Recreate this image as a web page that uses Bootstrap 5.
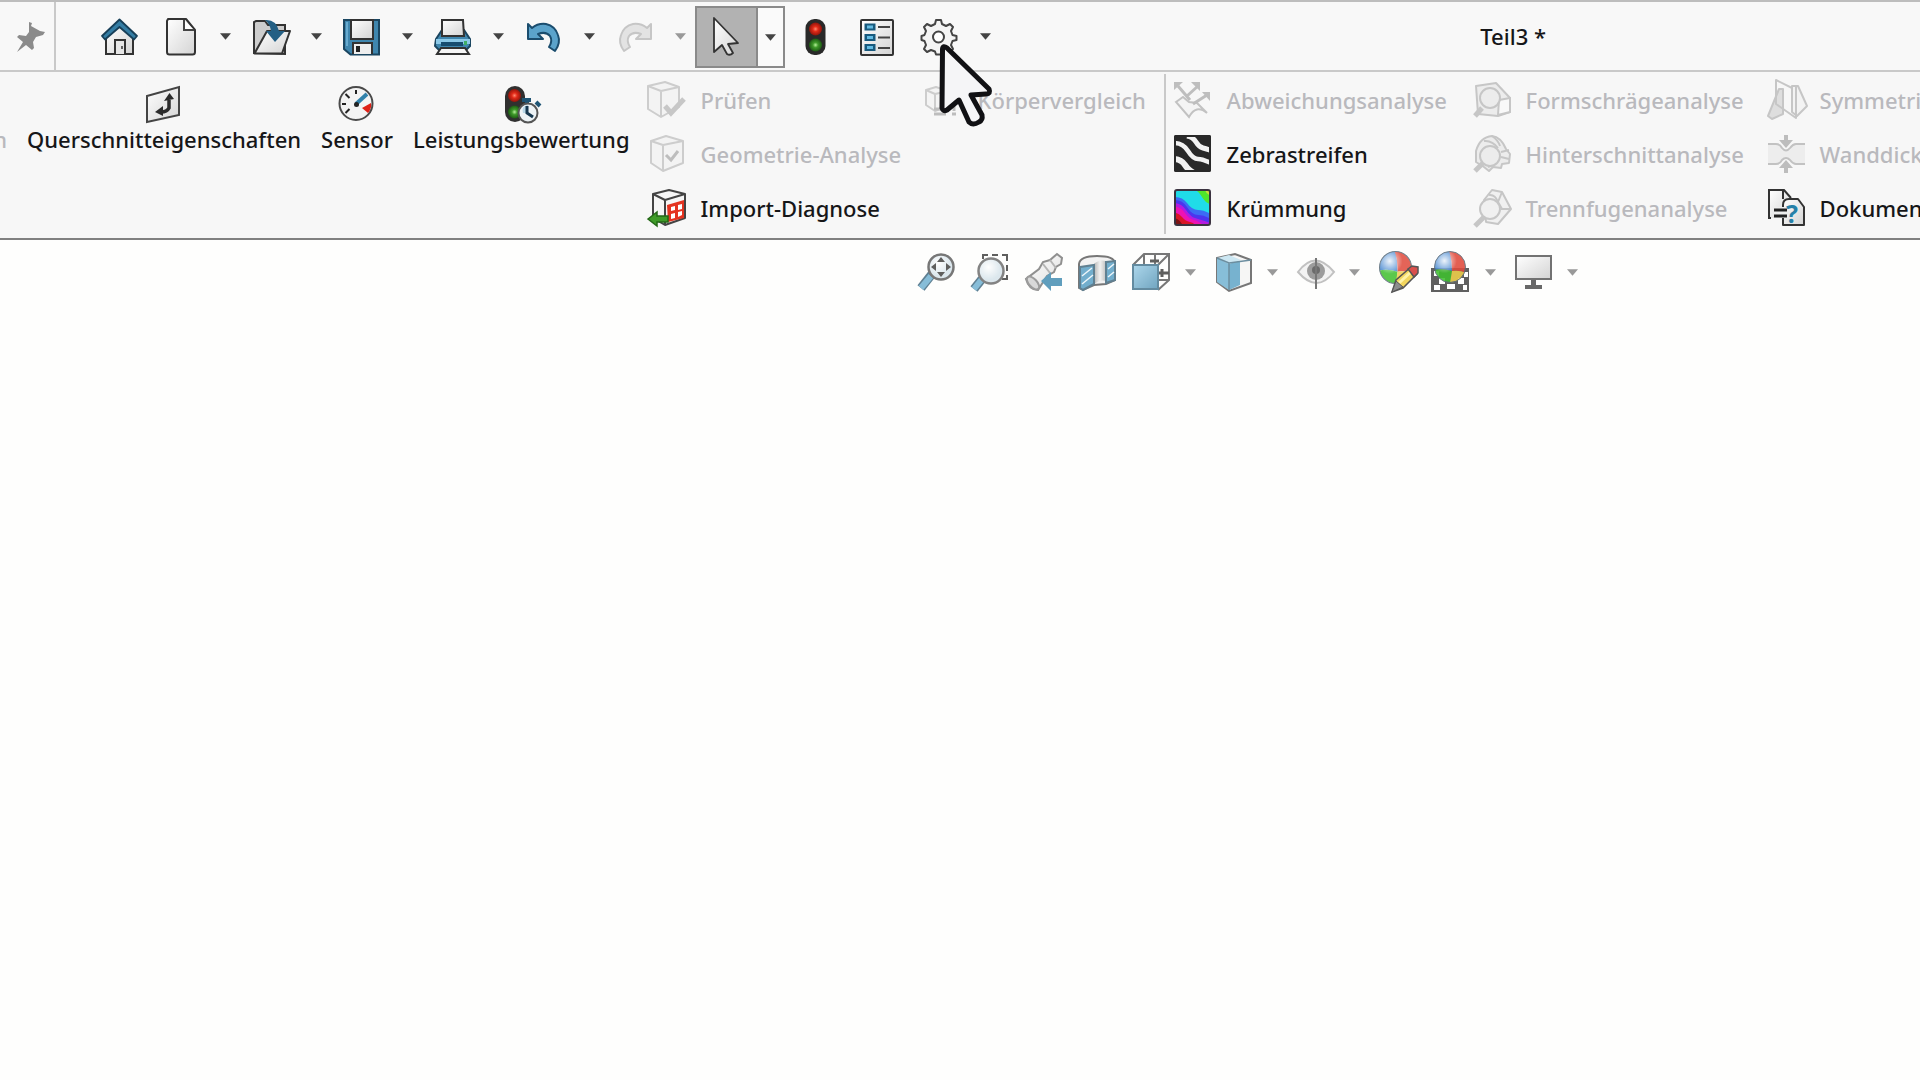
<!DOCTYPE html>
<html lang="de">
<head>
<meta charset="utf-8">
<meta name="viewport" content="width=device-width, initial-scale=1">
<title>Teil3 *</title>
<link href="https://cdn.jsdelivr.net/npm/bootstrap@5.3.0/dist/css/bootstrap.min.css" rel="stylesheet">
<style>
body{background:#fefefd;color:#161618;font-family:"Noto Sans","Open Sans",sans-serif;font-size:22px;font-weight:500;line-height:28px;overflow:hidden}
svg{display:block;flex:none;overflow:visible}
.ic{width:40px;height:40px}
.tool,.drop,.cmd,.bigcmd{border:0;background:none;padding:0;color:inherit;font-weight:inherit;display:flex;align-items:center;flex:none;white-space:nowrap}
.tool,.drop{justify-content:center}
.titlebar{height:72px;background:#f8f8f8;border-top:2px solid #bdbdbd;border-bottom:2px solid #c9c9c9}
.pinbox{width:56px;border-right:2px solid #c9c9c9}
.quick{padding-left:31px}
.quick .tool{width:62px;height:62px;padding-top:2px}
.quick .drop{width:29px;height:62px}
.splitsel{border:2px solid #8a8a8a;width:90px;height:62px;background:#fafafa;margin-top:2px}
.quick .splitsel .tool{width:61px;height:58px;padding:0 8px 0 0;background:#b2b2b2;border-right:2px solid #8a8a8a}
.quick .splitsel .drop{width:25px;height:58px}
.doctitle{margin-left:auto;margin-right:374px}
.ribbon{height:168px;background:#f7f7f7;border-bottom:2px solid #808080;padding-top:1px}
.bigcmd{flex-direction:column;padding:12px 10px 0;height:160px;justify-content:flex-start}
.cutoff{width:17px;padding:52px 10px 0 0;align-items:flex-end}
.cmd{height:54px;gap:14px}
.off{color:#b9b9bd}
.colcheck,.colbody,.colsurf,.colmold{flex:none}
.colcheck{width:277px;margin-left:7px}
.colbody{width:240px}
.vline{width:2px;height:160px;background:#c9c9c9;margin:1px 7px 0 0;flex:none}
.colsurf{width:299px}
.colmold{width:294px}
.hud{padding-left:909px;padding-top:8px}
.hud .tool{width:54px;height:48px}
.hud .drop{width:28px;height:48px;padding-right:6px}
.soft{opacity:.72}
.pointer{position:absolute;left:938px;top:42px;width:56px;height:86px;pointer-events:none}
</style>
<script src="https://cdn.jsdelivr.net/npm/bootstrap@5.3.0/dist/js/bootstrap.bundle.min.js"></script>
</head>
<body>
<svg width="0" height="0" class="position-absolute" aria-hidden="true">
 <defs>
  <linearGradient id="paper" x1="0" y1="0" x2="1" y2="1"><stop offset="0" stop-color="#fff"/><stop offset="1" stop-color="#d4d4d4"/></linearGradient>
  <linearGradient id="blue" x1="0" y1="0" x2="1" y2="1"><stop offset="0" stop-color="#8fc9e6"/><stop offset="1" stop-color="#3a83a9"/></linearGradient>
  <linearGradient id="tube" x1="0" y1="0" x2="1" y2="0"><stop offset="0" stop-color="#999"/><stop offset=".5" stop-color="#eee"/><stop offset="1" stop-color="#aaa"/></linearGradient>
  <radialGradient id="lens" cx=".4" cy=".35"><stop offset="0" stop-color="#fff"/><stop offset="1" stop-color="#cfdfe8"/></radialGradient>
  <radialGradient id="red"><stop offset="0" stop-color="#ff8a70"/><stop offset=".4" stop-color="#e22a18"/><stop offset="1" stop-color="#8e150c"/></radialGradient>
  <radialGradient id="green"><stop offset="0" stop-color="#b6f09a"/><stop offset=".4" stop-color="#3f9a2a"/><stop offset="1" stop-color="#1d5a14"/></radialGradient>
  <radialGradient id="shine" cx=".32" cy=".3" r=".4"><stop offset="0" stop-color="#fff" stop-opacity=".9"/><stop offset="1" stop-color="#fff" stop-opacity="0"/></radialGradient>
  <symbol id="caret" viewBox="0 0 12 7"><path d="M0 0h12L6 7z" fill="currentColor"/></symbol>
  <symbol id="ball" viewBox="0 0 32 32">
   <clipPath id="round"><circle cx="16" cy="16" r="15.500"/></clipPath>
   <g clip-path="url(#round)"><path d="M0 0h16q2 8 2 20Q8 17 0 19z" fill="#3f83cf"/><path d="M15 0h17v22q-6-3-14-2Q18 8 15 0z" fill="#e04a3c"/><path d="M0 19q9-2 18 1l-1 12H0z" fill="#3fbf2e"/><path d="M18 20q8-1 14 2v10H16z" fill="#f0cf4a"/></g>
   <circle cx="16" cy="16" r="15.500" fill="url(#shine)" stroke="#5a6b78" stroke-width="1"/>
  </symbol>
 </defs>
</svg>

<header class="titlebar d-flex align-items-center">
 <div class="pinbox d-flex align-items-center justify-content-center align-self-stretch">
  <button class="tool" aria-label="Anheften"><svg class="ic" viewBox="0 0 40 40"><path d="M20 6l3 1-1 3 9 5 5 1-2 3-7 2-3 5 1 6-2 2-6-5-9 7 6-10-6-5 2-2 7 1 3-4z" transform="translate(2 0)" fill="#8b8b8b"/></svg></button>
 </div>
 <nav class="quick d-flex align-items-center" aria-label="Schnellzugriff">
  <button class="tool" aria-label="Startseite"><svg class="ic" viewBox="0 0 40 40"><g transform="translate(1 0)"><path d="M7 20v17h27V20L20.500 8z" fill="url(#paper)" stroke="#333" stroke-width="2"/><path d="M16 37V23h10v14" fill="#e6e6e6" stroke="#333" stroke-width="2"/><path d="M23 29v3" stroke="#333" stroke-width="1.500"/><path d="M3 19L20.500 2.500 38 19l-3 3.500L20.500 10 6 22.500z" fill="#347da4" stroke="#173f58" stroke-width="1.800" stroke-linejoin="round"/></g></svg></button>
  <button class="tool" aria-label="Neu"><svg class="ic" viewBox="0 0 40 40"><path d="M8 2h18l9 11v22q0 2.500-2.500 2.500h-23Q7 37.500 7 35V4z" fill="url(#paper)" stroke="#333" stroke-width="2" stroke-linejoin="round"/><path d="M24 3v10h10" fill="#fff" stroke="#444" stroke-width="2"/></svg></button>
  <button class="drop" aria-label="Neu Optionen"><svg width="11" height="7" color="#444"><use href="#caret"/></svg></button>
  <button class="tool" aria-label="Öffnen"><svg class="ic" viewBox="0 0 40 40"><path d="M3 36V5l2-1h9l3 4h17v29z" fill="#cdcdcd" stroke="#333" stroke-width="2"/><path d="M3.500 36.500L16 14h23l-8 22.500z" fill="url(#paper)" stroke="#333" stroke-width="2" stroke-linejoin="round"/><path d="M14 3q11-1 14 11h6l-10 11-9-11h5q-1-7-6-11z" fill="#235f84"/></svg></button>
  <button class="drop" aria-label="Öffnen Optionen"><svg width="11" height="7" color="#444"><use href="#caret"/></svg></button>
  <button class="tool" aria-label="Speichern"><svg class="ic" viewBox="0 0 40 40"><path d="M2 3h35v34.500H8.500L2 32z" fill="#3f86ae" stroke="#1b4661" stroke-width="2"/><path d="M5 5v24" stroke="#68abd0" stroke-width="2"/><rect x="9" y="3" width="22" height="19" fill="url(#paper)" stroke="#333" stroke-width="2"/><path d="M11 37V26h19v11" fill="#eee" stroke="#333" stroke-width="2"/><path d="M14 29h4v6h-4z" fill="#222"/></svg></button>
  <button class="drop" aria-label="Speichern Optionen"><svg width="11" height="7" color="#444"><use href="#caret"/></svg></button>
  <button class="tool" aria-label="Drucken"><svg class="ic" viewBox="0 0 40 40"><path d="M3 22l6-9h22l6 9v7l-4 4H6l-4-4z" fill="#3f86ae" stroke="#1b4661" stroke-width="2"/><path d="M9 19V3h21l1 16z" fill="url(#paper)" stroke="#333" stroke-width="2"/><path d="M3 22h34v5H3z" fill="#8cc9e8"/><path d="M8 25h22v4H8z" fill="#174d70"/><path d="M31 24h3v4h-3z" fill="#3fae67"/><path d="M8 31h24l4 6H4z" fill="#f6f6f6" stroke="#333" stroke-width="2"/></svg></button>
  <button class="drop" aria-label="Drucken Optionen"><svg width="11" height="7" color="#444"><use href="#caret"/></svg></button>
  <button class="tool" aria-label="Rückgängig"><svg class="ic" viewBox="0 0 40 40"><path d="M4 7v15h15l-5-5q8-3 12 2 3 5-1 11l6 4q6-8 3-16-3-9-12-11-8-1-14 4z" fill="#5ba3cb" stroke="#1b4d6e" stroke-width="2" stroke-linejoin="round"/></svg></button>
  <button class="drop" aria-label="Rückgängig Optionen"><svg width="11" height="7" color="#444"><use href="#caret"/></svg></button>
  <button class="tool" aria-label="Wiederholen"><svg class="ic" viewBox="0 0 40 40"><path d="M36 7v15H21l5-5q-8-3-12 2-3 5 1 11l-6 4Q3 26 6 18q3-9 12-11 8-1 14 4z" fill="#e3e3e3" stroke="#c6c6c6" stroke-width="2" stroke-linejoin="round"/></svg></button>
  <button class="drop" aria-label="Wiederholen Optionen"><svg width="11" height="7" color="#999"><use href="#caret"/></svg></button>
  <div class="splitsel d-flex">
   <button class="tool" aria-label="Auswählen"><svg class="ic" viewBox="0 0 40 40"><path d="M11 1v34l8-7 5 9q3 2 6-1l-5-9 10-1z" fill="url(#paper)" stroke="#333" stroke-width="1.800" stroke-linejoin="round"/></svg></button>
   <button class="drop" aria-label="Auswählen Optionen"><svg width="11" height="7" color="#444"><use href="#caret"/></svg></button>
  </div>
  <button class="tool" aria-label="Modellneuaufbau"><svg class="ic" viewBox="0 0 40 40"><rect x="9.500" y="2" width="20" height="36" rx="9" fill="#292929"/><circle cx="19.500" cy="12" r="6.500" fill="url(#red)"/><circle cx="19.500" cy="28" r="6.500" fill="url(#green)"/></svg></button>
  <button class="tool" aria-label="Dateieigenschaften"><svg class="ic" viewBox="0 0 40 40"><rect x="3" y="3" width="32" height="35" rx="1" fill="url(#paper)" stroke="#333" stroke-width="2"/><path d="M6.500 6.500h11v7h-11zM6.500 17h11v7h-11zM6.500 27h11v7h-11z" fill="#185a7e"/><path d="M9 8.500h6v3H9zM9 19h6v3H9zM9 29h6v3H9z" fill="#63bbe2"/><path d="M20 10h12M20 20.500h12M20 31h12" stroke="#444" stroke-width="2"/></svg></button>
  <button class="tool" aria-label="Optionen"><svg class="ic" viewBox="0 0 40 40"><g transform="translate(-1 -1)"><path d="M17 4h5l1 4 4 2 4-2 3 3-2 4 1.500 4 4 1v4l-4 1-1.500 4 2 4-3 3-4-2-4 1.500-1 3h-5l-1-3-4-1.500-4 2-3-3 2-4L5.500 25l-3-1v-4l3-1L7 15l-2-4 3-3 4 2 4-2z" fill="#f4f4f4" stroke="#444" stroke-width="2" stroke-linejoin="round"/><circle cx="19.500" cy="21" r="5.500" fill="#fff" stroke="#444" stroke-width="2"/></g></svg></button>
  <button class="drop" aria-label="Optionen Menü"><svg width="11" height="7" color="#444"><use href="#caret"/></svg></button>
 </nav>
 <div class="doctitle">Teil3 *</div>
</header>

<section class="ribbon d-flex overflow-hidden" aria-label="Evaluieren">
 <button class="bigcmd cutoff off" disabled>n</button>
 <button class="bigcmd"><svg class="ic" viewBox="0 0 40 40"><g transform="translate(-1 -1)"><path d="M4 12l32-9v28L4 38z" fill="url(#paper)" stroke="#444" stroke-width="2"/><path d="M26 16v8q-2 4-8 4" fill="none" stroke="#2b2b2b" stroke-width="3.500"/><path d="M21 17l5.500-8 4.500 6zM20 22v10l-8-4z" fill="#2b2b2b"/></g></svg>Querschnitteigenschaften</button>
 <button class="bigcmd"><svg class="ic" viewBox="0 0 40 40"><g transform="translate(-1 -1)"><circle cx="20" cy="19.500" r="16.500" fill="#f3f3f3" stroke="#4a4a4a" stroke-width="2"/><path d="M20 6v4M6 20h4M9.500 10l4 4M9.500 29l4-4" stroke="#222" stroke-width="2"/><path d="M20 20L31 10" stroke="#3181aa" stroke-width="4"/><circle cx="20.500" cy="20.500" r="2.500" fill="#222"/><path d="M26 24l9-5q1 5-3 10z" fill="#df2116"/></g></svg>Sensor</button>
 <button class="bigcmd"><svg class="ic" viewBox="0 0 40 40"><g transform="translate(2 0)"><rect x="2" y="1" width="20" height="36" rx="10" fill="#303030"/><circle cx="11.500" cy="10.500" r="6.500" fill="url(#red)"/><circle cx="11.500" cy="27" r="6.500" fill="url(#green)"/><path d="M19 15h9M33 17l4 4M24 15v4" stroke="#1e5474" stroke-width="4"/><circle cx="25" cy="28" r="9.500" fill="#edf3f6" stroke="#555" stroke-width="2"/><path d="M25 28v-8q-7 1-5 8z" fill="#b8d8e8"/><path d="M24 21v7l6 4" fill="none" stroke="#173850" stroke-width="3"/></g></svg>Leistungsbewertung</button>
 <div class="colcheck">
  <button class="cmd off" disabled><svg class="ic" viewBox="0 0 40 40"><g fill="#f3f3f3" stroke="#cdcdcd" stroke-width="2" stroke-linejoin="round"><path d="M1 6l17-4 14 5v20l-18 10L1 29z"/><path d="M1 6l13 5 18-4M14 11v26" fill="none"/></g><path d="M18 26l6 7 13-14" fill="none" stroke="#c7c7c7" stroke-width="5"/></svg>Prüfen</button>
  <button class="cmd off" disabled><svg class="ic" viewBox="0 0 40 40"><g fill="#f3f3f3" stroke="#cdcdcd" stroke-width="2" stroke-linejoin="round"><path d="M4 7l15-5 17 5v22l-20 8-12-8z"/><path d="M4 7l12 4 20-4M16 11v26" fill="none"/></g><path d="M19 21l5 5 7-9" fill="none" stroke="#bdbdbd" stroke-width="3"/></svg>Geometrie-Analyse</button>
  <button class="cmd"><svg class="ic" viewBox="0 0 40 40"><g fill="#f6f6f6" stroke="#444" stroke-width="2" stroke-linejoin="round"><path d="M6 6l16-4 16 4v24l-20 7-12-7z"/><path d="M6 6l12 6 20-6M18 12v25" fill="none"/></g><path d="M20 17l17-5v18l-16 4z" fill="#e43320"/><path d="M24 19l4-1v4l-4 1zM31 17l4-1v5l-4 1zM24 26l4-1v5l-4 1zM31 24l4-1v4l-4 2z" fill="#fff"/><path d="M1 31l9-7v4h11v6H10v4z" fill="#3f9b28" stroke="#246817" stroke-width="1.500"/></svg>Import-Diagnose</button>
 </div>
 <div class="colbody">
  <button class="cmd off" disabled><svg class="ic" viewBox="0 0 40 40"><g fill="#f4f4f4" stroke="#cdcdcd" stroke-width="2" stroke-linejoin="round"><path d="M2 10l10-3 12 4v15l-13 5-9-6z"/><path d="M2 10l9 4 13-3M11 14v17" fill="none"/></g><path d="M10 29h12M10 34h12M28 34h4M30 25v6" stroke="#bdbdbd" stroke-width="3"/></svg>Körpervergleich</button>
 </div>
 <div class="vline"></div>
 <div class="colsurf">
  <button class="cmd off" disabled><svg class="ic" viewBox="0 0 40 40"><path d="M3 22l7-5 6 5 8 1 10 10q-11-9-18 4z" fill="#f4f4f4" stroke="#c2c2c2" stroke-width="2"/><path d="M17 20L5 6M14 16L25 6M20 24l14-9" stroke="#bebebe" stroke-width="3"/><path d="M1 2h9l-9 8zM18 2h9v9zM29 12h8v9z" fill="#bebebe"/></svg>Abweichungsanalyse</button>
  <button class="cmd"><svg class="ic" viewBox="0 0 40 40"><clipPath id="zb"><rect x="2" y="2" width="35" height="35" rx="1"/></clipPath><rect x="1" y="1" width="37" height="37" rx="2" fill="#292929"/><g clip-path="url(#zb)" fill="none" stroke="#f2f2f2" stroke-width="4.500"><path d="M1 9q9 0 14 8t10 8 15 5"/><path d="M0 25q8 0 12 6t9 8" stroke-width="6"/><path d="M14 2q6 1 9 6t7 6 10 3" stroke-width="5"/></g><rect x="2" y="2" width="35" height="35" rx="1" fill="none" stroke="#292929" stroke-width="2"/></svg>Zebrastreifen</button>
  <button class="cmd"><svg class="ic" viewBox="0 0 40 40"><clipPath id="kr"><rect x="2" y="2" width="35" height="35" rx="1"/></clipPath><g clip-path="url(#kr)"><rect width="40" height="40" fill="#20dce8"/><path d="M19 0h21v17q-7-1-11-8T19 0z" fill="#4fe52b"/><path d="M31 0h9v9q-7-2-9-9z" fill="#c9dc38"/><path d="M0 9q9-1 14 6t11 7 15 5v13H0z" fill="#3c6bf4"/><path d="M0 12q9-1 14 7t11 8 15 5v8H0z" fill="#4b35ee"/><path d="M0 15q8 0 13 7t9 8 18 6v4H0z" fill="#b21be0"/><path d="M0 18q8 1 12 7t9 7 13 8H0z" fill="#ee12b4"/><path d="M0 24q6 1 9 5t8 5 7 6H0z" fill="#d81626"/><path d="M0 30q7 0 11 10H0z" fill="#7d1515"/></g><rect x="2" y="2" width="35" height="35" rx="2" fill="none" stroke="#3b3340" stroke-width="2"/></svg>Krümmung</button>
 </div>
 <div class="colmold">
  <button class="cmd off" disabled><svg class="ic" viewBox="0 0 40 40"><g fill="#ececec" stroke="#c6c6c6" stroke-width="2" stroke-linejoin="round"><path d="M4 6l20-3 14 15v14l-12 4-20-2z"/><path d="M27 20l11-2v14l-12 3z" fill="#f9f9f9"/><path d="M3 36l7-8" stroke-width="5"/><circle cx="18" cy="18" r="10"/></g></svg>Formschrägeanalyse</button>
  <button class="cmd off" disabled><svg class="ic" viewBox="0 0 40 40"><g fill="#ececec" stroke="#c6c6c6" stroke-width="2" stroke-linejoin="round"><path d="M4 28V17Q8 3 20 2q9 1 14 13l4 5-1 9-7 1-1 4-8-1-4 4-5-4z"/><path d="M12 7q8-1 14 7M20 2q6 4 8 10M29 18l8-2M29 23l8 2M16 33l5-2" fill="none"/><path d="M3 37l8-8" stroke-width="5"/><circle cx="18" cy="22" r="10"/></g></svg>Hinterschnittanalyse</button>
  <button class="cmd off" disabled><svg class="ic" viewBox="0 0 40 40"><g fill="#f0f0f0" stroke="#c6c6c6" stroke-width="2" stroke-linejoin="round"><path d="M12 12l8-10 10 2 9 17-13 15-12-2z"/><path d="M17 7q6-1 9 7l4 7M30 4l-4 10M39 21H29" fill="none"/><path d="M3 38l9-9" stroke-width="5"/><circle cx="18" cy="21" r="10"/></g></svg>Trennfugenanalyse</button>
 </div>
 <div>
  <button class="cmd off" disabled><svg class="ic" viewBox="0 0 40 40"><g fill="#f3f3f3" stroke="#c6c6c6" stroke-width="2" stroke-linejoin="round"><path d="M2 36L13 9h4v25L6 39z" fill="#dedede"/><path d="M10 0l20 10v28L10 24z" fill="none"/><path d="M26 6h6l9 20-10 10-5-4z"/><path d="M30 7v30"/></g></svg>Symmetrie</button>
  <button class="cmd off" disabled><svg class="ic" viewBox="0 0 40 40"><path d="M2 10h8q4 0 6 4 4 5 8 0 3-4 6-4h9v19h-9q-3 0-6-4-4-4-8 0-3 4-6 4H2z" fill="#ededed"/><path d="M2 10h8q4 0 6 4 4 5 8 0 3-4 6-4h9M2 30h8q4 0 6-4 4-4 8 0 3 4 6 4h9" fill="none" stroke="#c2c2c2" stroke-width="2"/><path d="M18 1h4v5h5l-7 8-7-8h5zM18 39h4v-5h5l-7-8-7 8h5z" fill="#bdbdbd"/></svg>Wanddick</button>
  <button class="cmd"><svg class="ic" viewBox="0 0 40 40"><path d="M4 30V2h14l7 9v19" fill="url(#paper)"/><path d="M5 30H3V2h15l7 8M17 3v8" fill="none" stroke="#333" stroke-width="2"/><path d="M17 37V17q0-6 6-6h9l6 8v18z" fill="url(#paper)" stroke="#333" stroke-width="2" stroke-linejoin="round"/><path d="M8 19h14v11H8z" fill="#eee"/><path d="M8 22h13M8 28h13" stroke="#222" stroke-width="3"/><text x="20" y="35" font-family="Noto Sans" font-size="25" font-weight="700" fill="#2580a8">?</text></svg>Dokumen</button>
 </div>
</section>

<nav class="hud d-flex" aria-label="Ansicht">
 <button class="tool" aria-label="In Fenster zoomen"><svg class="ic soft" viewBox="0 0 40 40"><path d="M16 22L5 36" stroke="#23506a" stroke-width="9"/><path d="M15 24L5 36" stroke="#5aa5ca" stroke-width="6"/><circle cx="25" cy="15" r="12.500" fill="url(#lens)" stroke="#444" stroke-width="2.500"/><path d="M25 5l4 5h-8zM25 25l4-5h-8zM15 15l5-4v8zM35 15l-5-4v8z" fill="#222"/></svg></button>
 <button class="tool" aria-label="Ausschnitt vergrößern"><svg class="ic soft" viewBox="0 0 40 40"><path d="M13 7V3h5M22 3h6M32 3h5v6M37 13v6M37 23v4h-5" fill="none" stroke="#222" stroke-width="2"/><path d="M12 27l-8 10" stroke="#23506a" stroke-width="9"/><path d="M12 27l-8 10" stroke="#5aa5ca" stroke-width="6"/><circle cx="21" cy="19" r="12.500" fill="url(#lens)" stroke="#555" stroke-width="2.500"/></svg></button>
 <button class="tool" aria-label="Vorherige Ansicht"><svg class="ic soft" viewBox="0 0 40 40"><path d="M33 2l5 4-1 6-5 3-2 5-7 4-9 14q-9 0-12-11l13-10 4-7 7-2z" fill="url(#paper)" stroke="#666" stroke-width="2"/><path d="M19 12l7 9M26 8l6 8" stroke="#999" stroke-width="2"/><ellipse cx="9" cy="31" rx="4" ry="8" transform="rotate(-43 9 31)" fill="#ccc" stroke="#777" stroke-width="2"/><path d="M17 29l10-9v6h11v8H27v5z" fill="#247aa5"/></svg></button>
 <button class="tool" aria-label="Schnittansicht"><svg class="ic soft" viewBox="0 0 40 40"><g transform="translate(-1 0)"><path d="M2 12q1-8 18-8t18 7v17l-9 4-12 1-11 5-4-2z" fill="#eee" stroke="#444" stroke-width="2"/><path d="M17 12q5-5 12-3v20q-6-2-12 3z" fill="url(#tube)"/><path d="M3 15l14-2v19L6 38l-3-2zM29 10l9-1v19l-9 3z" fill="#3d90bb" stroke="#245068" stroke-width="2"/><path d="M5 24l10-8M5 32l11-9M31 17l6-5M31 25l6-5" stroke="#e8f4fa" stroke-width="1.500"/></g></svg></button>
 <button class="tool" aria-label="Ansichtsausrichtung"><svg class="ic soft" viewBox="0 0 40 40"><g transform="translate(-1 0)"><path d="M2 13L13 2h25v26L27 38M13 2v11M38 2L27 13M13 28h25M24 2v24" fill="none" stroke="#444" stroke-width="2"/><path d="M19 9h9M31 17v8M28 21h10" stroke="#222" stroke-width="3"/><rect x="2" y="13" width="25" height="24" fill="url(#blue)" stroke="#285f7d" stroke-width="2"/></g></svg></button>
 <button class="drop" aria-label="Ausrichtung Optionen"><svg width="11" height="7" color="#999"><use href="#caret"/></svg></button>
 <button class="tool" aria-label="Anzeigeart"><svg class="ic soft" viewBox="0 0 40 40"><path d="M3 6l18-4 16 6v23l-22 8-12-9z" fill="#f3f3f3" stroke="#444" stroke-width="2"/><path d="M3 6l12 5v27L3 30z" fill="#5aa6cb"/><path d="M15 11l11-2v24l-11 5z" fill="#4496be"/><path d="M3 6l12-3 12 5-12 4z" fill="#b9dfef"/><path d="M3 6l12 5 22-3M15 11v27" fill="none" stroke="#35647c" stroke-width="1.500"/></svg></button>
 <button class="drop" aria-label="Anzeigeart Optionen"><svg width="11" height="7" color="#999"><use href="#caret"/></svg></button>
 <button class="tool" aria-label="Ausblenden und einblenden"><svg class="ic soft" viewBox="0 0 40 40"><path d="M2 20Q19-3 38 20 21 42 2 20z" fill="#f0f0f0" stroke="#aaa" stroke-width="2"/><circle cx="20" cy="19" r="9" fill="#777"/><circle cx="20" cy="18" r="4" fill="#333"/><path d="M20 6v31" stroke="#444" stroke-width="2"/></svg></button>
 <button class="drop" aria-label="Einblenden Optionen"><svg width="11" height="7" color="#999"><use href="#caret"/></svg></button>
 <button class="tool" aria-label="Erscheinungsbild bearbeiten"><svg class="ic" viewBox="0 0 40 40"><use href="#ball" x="1" y="-1" width="33" height="33" opacity=".85"/><path d="M14 40l4-12 15-13 6 7-14 14z" fill="#f3d65e" stroke="#555" stroke-width="1.500"/><path d="M21 31l14-13" stroke="#fff3a8" stroke-width="3"/><path d="M30 17l4-3 6 1v6l-4 4z" fill="#d9504c" stroke="#555" stroke-width="1.500"/><path d="M14 40l4-11 7 6z" fill="#8d8d8d" stroke="#555"/></svg></button>
 <button class="tool" aria-label="Bühne übernehmen"><svg class="ic" viewBox="0 0 40 40"><g transform="translate(-2 0)"><path d="M1 16h38v24H1z" fill="#606060"/><path d="M4 19h5v5H4zM9 26h6v6H9zM4 33h6v5H4zM17 32h8v5h-8zM28 26h6v6h-6zM33 33h4v5h-4zM34 20h4v5h-4z" fill="#fff"/><use href="#ball" x="4" y="-1" width="32" height="32" opacity=".88"/></g></svg></button>
 <button class="drop" aria-label="Bühne Optionen"><svg width="11" height="7" color="#999"><use href="#caret"/></svg></button>
 <button class="tool" aria-label="Ansichtseinstellungen"><svg class="ic" viewBox="0 0 40 40"><g transform="translate(-1 0)"><rect x="3" y="4" width="35" height="23" fill="url(#paper)" stroke="#727272" stroke-width="2"/><path d="M18 28h5v5h-5zM12 33h17v4H12z" fill="#686868"/></g></svg></button>
 <button class="drop" aria-label="Einstellungen Optionen"><svg width="11" height="7" color="#999"><use href="#caret"/></svg></button>
</nav>

<svg class="pointer" viewBox="0 0 56 86" aria-hidden="true"><path d="M4.500 7Q5 3 9 6L51 47q2 5-3 5L33 53l11 20q1 5-3 7-6 4-10 0L21 58 9 68q-4 2-5-2z" fill="#f5f5f7" stroke="#111114" stroke-width="5" stroke-linejoin="round"/></svg>
</body>
</html>
